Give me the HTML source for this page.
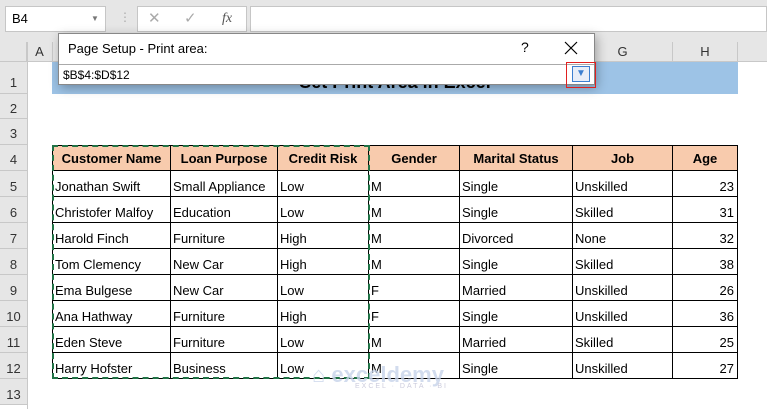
<!DOCTYPE html>
<html><head><meta charset="utf-8"><style>
*{margin:0;padding:0;box-sizing:border-box}
body{width:767px;height:409px;overflow:hidden;background:#fff;font-family:"Liberation Sans",sans-serif;position:relative}
.a{position:absolute}
.ch{position:absolute;top:42px;height:19px;background:#e6e6e6;border-right:1px solid #c8c8c8;font-size:13px;color:#333;text-align:center;line-height:20px}
.rh{position:absolute;left:0;width:27px;background:#e6e6e6;border-bottom:1px solid #c8c8c8;font-size:13px;color:#333;text-align:center}
.c{position:absolute;border-right:1px solid #000;border-bottom:1px solid #000;font-size:13px;color:#000;padding-left:2px;white-space:nowrap;overflow:hidden}
.h{background:#f8cbad;font-weight:bold;text-align:center;padding:0}
.n{text-align:right;padding-right:3px}
</style></head><body>
<div class="a" style="left:0;top:0;width:767px;height:42px;background:#e6e6e6"></div>
<div class="a" style="left:5px;top:6px;width:101px;height:26px;background:#fff;border:1px solid #c6c6c6;font-size:13px;line-height:24px;padding-left:6px">B4<span class="a" style="left:85px;top:0;font-size:8px;color:#777">▼</span></div>
<div class="a" style="left:119px;top:10px;color:#aaa;font-size:12px">⋮</div>
<div class="a" style="left:137px;top:6px;width:110px;height:26px;background:#fff;border:1px solid #c6c6c6;font-size:15px;color:#aaa;line-height:24px"><span class="a" style="left:10px">✕</span><span class="a" style="left:46px">✓</span><span class="a" style="left:84px;font-family:'Liberation Serif',serif;font-style:italic;color:#555;font-size:14px">fx</span></div>
<div class="a" style="left:250px;top:6px;width:517px;height:26px;background:#fff;border:1px solid #c6c6c6"></div>
<div class="a" style="left:0;top:42px;width:27px;height:19px;background:#e6e6e6;border-right:1px solid #c8c8c8"></div>
<div class="ch" style="left:27px;width:26px">A</div>
<div class="ch" style="left:53px;width:118px"></div>
<div class="ch" style="left:573px;width:100px">G</div>
<div class="ch" style="left:673px;width:65px">H</div>
<div class="ch" style="left:738px;width:29px;border:0"></div>
<div class="a" style="left:0;top:61px;width:767px;height:1px;background:#c8c8c8"></div>
<div class="rh" style="top:62px;height:32px;line-height:42px">1</div>
<div class="rh" style="top:94px;height:25px;line-height:29px">2</div>
<div class="rh" style="top:119px;height:26px;line-height:30px">3</div>
<div class="rh" style="top:145px;height:26px;line-height:30px">4</div>
<div class="rh" style="top:171px;height:26px;line-height:32px">5</div>
<div class="rh" style="top:197px;height:26px;line-height:32px">6</div>
<div class="rh" style="top:223px;height:26px;line-height:32px">7</div>
<div class="rh" style="top:249px;height:26px;line-height:32px">8</div>
<div class="rh" style="top:275px;height:26px;line-height:32px">9</div>
<div class="rh" style="top:301px;height:26px;line-height:32px">10</div>
<div class="rh" style="top:327px;height:26px;line-height:32px">11</div>
<div class="rh" style="top:353px;height:26px;line-height:32px">12</div>
<div class="rh" style="top:379px;height:26px;line-height:32px">13</div>
<div class="a" style="left:27px;top:42px;width:1px;height:367px;background:#c8c8c8"></div>
<div class="a" style="left:52px;top:62px;width:686px;height:32px;background:#9dc3e6;font-size:18px;font-weight:bold;text-align:center;line-height:40px">Set Print Area in Excel</div>
<div id="t"></div>
<script>
var cols=[53,171,278,369,460,573,673,738];
var rows=[["Customer Name","Loan Purpose","Credit Risk","Gender","Marital Status","Job","Age"],
["Jonathan Swift","Small Appliance","Low","M","Single","Unskilled","23"],
["Christofer Malfoy","Education","Low","M","Single","Skilled","31"],
["Harold Finch","Furniture","High","M","Divorced","None","32"],
["Tom Clemency","New Car","High","M","Single","Skilled","38"],
["Ema Bulgese","New Car","Low","F","Married","Unskilled","26"],
["Ana Hathway","Furniture","High","F","Single","Unskilled","36"],
["Eden Steve","Furniture","Low","M","Married","Skilled","25"],
["Harry Hofster","Business","Low","M","Single","Unskilled","27"]];
var h='';
rows.forEach(function(r,i){var top=145+i*26;r.forEach(function(t,j){
var cls='c'+(i==0?' h':(j==6?' n':''));
h+='<div class="'+cls+'" style="left:'+cols[j]+'px;top:'+top+'px;width:'+(cols[j+1]-cols[j])+'px;height:26px;line-height:'+(i==0?28:32)+'px">'+t+'</div>';});});
document.getElementById('t').innerHTML=h;
</script>
<div class="a" style="left:53px;top:145px;width:685px;height:1px;background:#000"></div>
<div class="a" style="left:52px;top:145px;width:1px;height:234px;background:#000"></div>
<div class="a" style="left:52px;top:145px;width:318px;height:234px;border:2px dashed #217346"></div>
<div class="a" style="left:312px;top:362px;font-size:22px;font-weight:bold;color:#c8d4ea;opacity:.8">⌂ exceldemy</div>
<div class="a" style="left:355px;top:383px;font-size:7px;color:#ccd;letter-spacing:2px">EXCEL · DATA · BI</div>
<div class="a" style="left:58px;top:33px;width:537px;height:52px;background:#fff;border:1px solid #888;box-shadow:2px 3px 10px rgba(0,0,0,.3)">
<div class="a" style="left:9px;top:7px;font-size:13px;color:#000">Page Setup - Print area:</div>
<div class="a" style="left:462px;top:5px;font-size:14px">?</div>
<svg class="a" style="left:505px;top:7px" width="14" height="14"><path d="M1 1L13 13M13 1L1 13" stroke="#000" stroke-width="1.2"/></svg>
<div class="a" style="left:0;top:30px;width:535px;height:1px;background:#aaa"></div>
<div class="a" style="left:4px;top:34px;font-size:12px">$B$4:$D$12</div>
<div class="a" style="left:513px;top:32px;width:18px;height:16px;border:1px solid #3c7fd0;background:#e8eef8;color:#3c7fd0;font-size:10px;text-align:center;line-height:14px">▼</div>
</div>
<div class="a" style="left:566px;top:62px;width:30px;height:26px;border:1px solid #e02020"></div>
</body></html>
